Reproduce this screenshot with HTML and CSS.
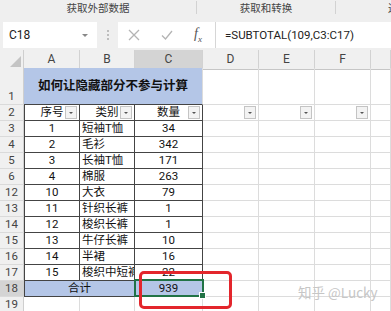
FILE: index.html
```html
<!DOCTYPE html>
<html lang="zh-CN">
<head>
    <meta charset="UTF-8">
    <meta name="viewport" content="width=device-width, initial-scale=1.0">
    <title>如何让隐藏部分不参与计算</title>
    <link rel="stylesheet" href="styles.css">
</head>
<body>
    <div class="top">
        <div class="ribbon">
            <div class="grp g1">获取外部数据</div>
            <div class="grp g2">获取和转换</div>
            <div class="grp g3">连</div>
        </div>
        <div class="fbar">
            <div class="namebox">
                <span>C18</span>
                <span class="arrow"></span>
            </div>
            <div class="dots"><i></i><i></i><i></i></div>
            <div class="fx-area">
                <div class="icons">
                    <svg width="12" height="12" viewBox="0 0 12 12"><path d="M1 1L11 11M11 1L1 11" stroke="#b4b4b4" stroke-width="1.3" fill="none"/></svg>
                    <svg width="12" height="12" viewBox="0 0 12 12"><path d="M1 6.5L4.5 10L11 2" stroke="#b4b4b4" stroke-width="1.3" fill="none"/></svg>
                    <span class="fx">f<sub>x</sub></span>
                </div>
                <div class="formula">=SUBTOTAL(109,C3:C17)</div>
            </div>
        </div>
    </div>

    <div class="sheet">
        <div class="row hdr">
            <div class="rh corner"><svg width="11" height="11" viewBox="0 0 11 11"><path d="M11 0V11H0Z" fill="#c4c4c4"/></svg></div>
            <div class="ch">A</div>
            <div class="ch">B</div>
            <div class="ch sel">C</div>
            <div class="ch">D</div>
            <div class="ch">E</div>
            <div class="ch">F</div>
            <div class="ch"></div>
        </div>
        <div class="row r1">
            <div class="rh">1</div>
            <div class="c title">如何让隐藏部分不参与计算</div>
            <div class="c"></div><div class="c"></div><div class="c"></div><div class="c"></div>
        </div>
        <div class="row">
            <div class="rh">2</div>
            <div class="c b bl ctr">序号<span class="fb"></span></div>
            <div class="c b ctr">类别<span class="fb"></span></div>
            <div class="c b ctr">数量<span class="fb"></span></div>
            <div class="c"><span class="fb"></span></div>
            <div class="c"><span class="fb"></span></div>
            <div class="c"><span class="fb"></span></div>
            <div class="c"></div>
        </div>
        <div class="row">
            <div class="rh">3</div>
            <div class="c b bl ctr">1</div><div class="c b lft">短袖T恤</div><div class="c b ctr">34</div>
            <div class="c"></div><div class="c"></div><div class="c"></div><div class="c"></div>
        </div>
        <div class="row">
            <div class="rh">4</div>
            <div class="c b bl ctr">2</div><div class="c b lft">毛衫</div><div class="c b ctr">342</div>
            <div class="c"></div><div class="c"></div><div class="c"></div><div class="c"></div>
        </div>
        <div class="row">
            <div class="rh">5</div>
            <div class="c b bl ctr">3</div><div class="c b lft">长袖T恤</div><div class="c b ctr">171</div>
            <div class="c"></div><div class="c"></div><div class="c"></div><div class="c"></div>
        </div>
        <div class="row">
            <div class="rh">6</div>
            <div class="c b bl ctr">4</div><div class="c b lft">棉服</div><div class="c b ctr">263</div>
            <div class="c"></div><div class="c"></div><div class="c"></div><div class="c"></div>
        </div>
        <div class="row">
            <div class="rh">12</div>
            <div class="c b bl ctr">10</div><div class="c b lft">大衣</div><div class="c b ctr">79</div>
            <div class="c"></div><div class="c"></div><div class="c"></div><div class="c"></div>
        </div>
        <div class="row">
            <div class="rh">13</div>
            <div class="c b bl ctr">11</div><div class="c b lft">针织长裤</div><div class="c b ctr">1</div>
            <div class="c"></div><div class="c"></div><div class="c"></div><div class="c"></div>
        </div>
        <div class="row">
            <div class="rh">14</div>
            <div class="c b bl ctr">12</div><div class="c b lft">梭织长裤</div><div class="c b ctr">1</div>
            <div class="c"></div><div class="c"></div><div class="c"></div><div class="c"></div>
        </div>
        <div class="row">
            <div class="rh">15</div>
            <div class="c b bl ctr">13</div><div class="c b lft">牛仔长裤</div><div class="c b ctr">10</div>
            <div class="c"></div><div class="c"></div><div class="c"></div><div class="c"></div>
        </div>
        <div class="row">
            <div class="rh">16</div>
            <div class="c b bl ctr">14</div><div class="c b lft">半裙</div><div class="c b ctr">16</div>
            <div class="c"></div><div class="c"></div><div class="c"></div><div class="c"></div>
        </div>
        <div class="row">
            <div class="rh">17</div>
            <div class="c b bl ctr">15</div><div class="c b lft">梭织中短裤</div><div class="c b ctr">22</div>
            <div class="c"></div><div class="c"></div><div class="c"></div><div class="c"></div>
        </div>
        <div class="row">
            <div class="rh sel">18</div>
            <div class="c b bl ctr sum">合计</div>
            <div class="c b ctr blue">939<span class="selbox"><span class="handle"></span></span></div>
            <div class="c"></div><div class="c"></div><div class="c"></div><div class="c"></div>
        </div>
        <div class="row">
            <div class="rh">19</div>
            <div class="c"></div><div class="c"></div><div class="c"></div>
            <div class="c"></div><div class="c"></div><div class="c"></div><div class="c"></div>
        </div>

        <div class="mark"></div>
        <div class="wm">知乎 @Lucky</div>
    </div>
</body>
</html>
```

FILE: styles.css
```css
body {
    margin: 0;
    width: 391px;
    height: 311px;
    overflow: hidden;
    background: #fff;
    font-family: Roboto, "Noto Sans CJK SC", sans-serif;
}
.top {
    background: #efefef;
    padding-bottom: 2px;
}
.ribbon {
    display: flex;
    height: 16px;
    font-size: 10.5px;
    color: #444;
    line-height: 14px;
    font-family: "Noto Sans CJK SC", sans-serif;
    overflow: hidden;
}
.grp {
    text-align: center;
    border-right: 1px solid #d2d2d2;
    margin: 1px 0 2px;
}
.g1 {
    width: 196px;
}
.g2 {
    width: 138px;
}
.g3 {
    flex: 1;
    border-right: none;
    text-align: left;
    padding-left: 52px;
    white-space: nowrap;
    overflow: hidden;
}
.fbar {
    display: flex;
    height: 26px;
    margin-top: 6px;
}
.namebox {
    width: 94px;
    margin-left: 3px;
    background: #fff;
    box-sizing: border-box;
    display: flex;
    align-items: center;
    justify-content: space-between;
    padding: 0 9px 0 6px;
    font-size: 12px;
    color: #222;
}
.arrow {
    width: 0;
    height: 0;
    border-left: 3px solid transparent;
    border-right: 3px solid transparent;
    border-top: 3px solid #888;
}
.dots {
    width: 21px;
    display: flex;
    flex-direction: column;
    align-items: center;
    justify-content: center;
    gap: 2px;
}
.dots i {
    width: 2px;
    height: 2px;
    background: #bdbdbd;
}
.fx-area {
    flex: 1;
    background: #fff;
    display: flex;
}
.icons {
    width: 98px;
    display: flex;
    align-items: center;
    gap: 21px;
    padding-left: 10px;
    box-sizing: border-box;
    border-right: 1px solid #d6d6d6;
}
.fx {
    font-family: "Liberation Serif", serif;
    font-style: italic;
    font-size: 14px;
    color: #555;
}
.fx sub {
    font-size: 9px;
}
.formula {
    padding-left: 9px;
    font-size: 11.5px;
    line-height: 26px;
    color: #222;
}
.sheet {
    position: relative;
}
.row {
    display: grid;
    grid-template-columns: 24px 56px 55px 68px 56px 56px 56px 20px;
    height: 16px;
}
.hdr {
    height: 18px;
}
.r1 {
    height: 37px;
}
.rh {
    background: #f0f0f0;
    border-right: 1px solid #cfcfcf;
    border-bottom: 1px solid #dadada;
    text-align: center;
    color: #444;
    font-size: 11.5px;
    line-height: 15px;
    box-sizing: border-box;
}
.rh.sel {
    background: #d4d4d4;
}
.r1 .rh {
    display: flex;
    align-items: flex-end;
    justify-content: center;
}
.corner {
    display: flex;
    align-items: flex-end;
    justify-content: flex-end;
    padding: 0 2px 2px 0;
}
.ch {
    background: #f0f0f0;
    border-right: 1px solid #d2d2d2;
    border-bottom: 1px solid #c6c6c6;
    text-align: center;
    font-size: 12px;
    line-height: 18px;
    color: #444;
    box-sizing: border-box;
}
.ch.sel {
    background: #d4d4d4;
    border-bottom: 2px solid #217346;
}
.c {
    position: relative;
    box-sizing: border-box;
    border-right: 1px solid #dcdcdc;
    border-bottom: 1px solid #dcdcdc;
    font-size: 11.5px;
    line-height: 15px;
    white-space: nowrap;
    color: #111;
}
.b {
    border-right-color: #444;
    border-bottom-color: #444;
}
.bl {
    border-left: 1px solid #444;
}
.ctr {
    text-align: center;
}
.lft {
    padding-left: 2px;
    overflow: hidden;
}
.title {
    grid-column: span 3;
    background: #b4c6e7;
    border-bottom-color: #444;
    text-align: center;
    font-weight: bold;
    font-size: 12.5px;
    line-height: 36px;
    color: #111;
}
.sum {
    grid-column: span 2;
}
.sum,
.blue {
    background: #b4c6e7;
}
.fb {
    position: absolute;
    right: 2px;
    top: 1px;
    width: 12px;
    height: 13px;
    box-sizing: border-box;
    background: #f3f3f3;
    border: 1px solid #c4c4c4;
}
.fb::after {
    content: "";
    position: absolute;
    left: 3px;
    top: 5px;
    border-left: 2px solid transparent;
    border-right: 2px solid transparent;
    border-top: 2px solid #555;
}
.selbox {
    position: absolute;
    left: -1px;
    top: -2px;
    right: -2px;
    bottom: -1px;
    border: 2px solid #217346;
    z-index: 2;
}
.handle {
    position: absolute;
    right: -4px;
    bottom: -4px;
    width: 5px;
    height: 5px;
    background: #217346;
    border: 1px solid #fff;
}
.mark {
    position: absolute;
    left: 139px;
    top: 221px;
    width: 93px;
    height: 38px;
    box-sizing: border-box;
    border: 3px solid #e3262c;
    border-radius: 5px;
    z-index: 3;
}
.wm {
    position: absolute;
    left: 298px;
    top: 232px;
    font-family: "Noto Sans CJK SC", sans-serif;
    font-size: 13.5px;
    color: #c6c6c6;
    z-index: 3;
}
```
